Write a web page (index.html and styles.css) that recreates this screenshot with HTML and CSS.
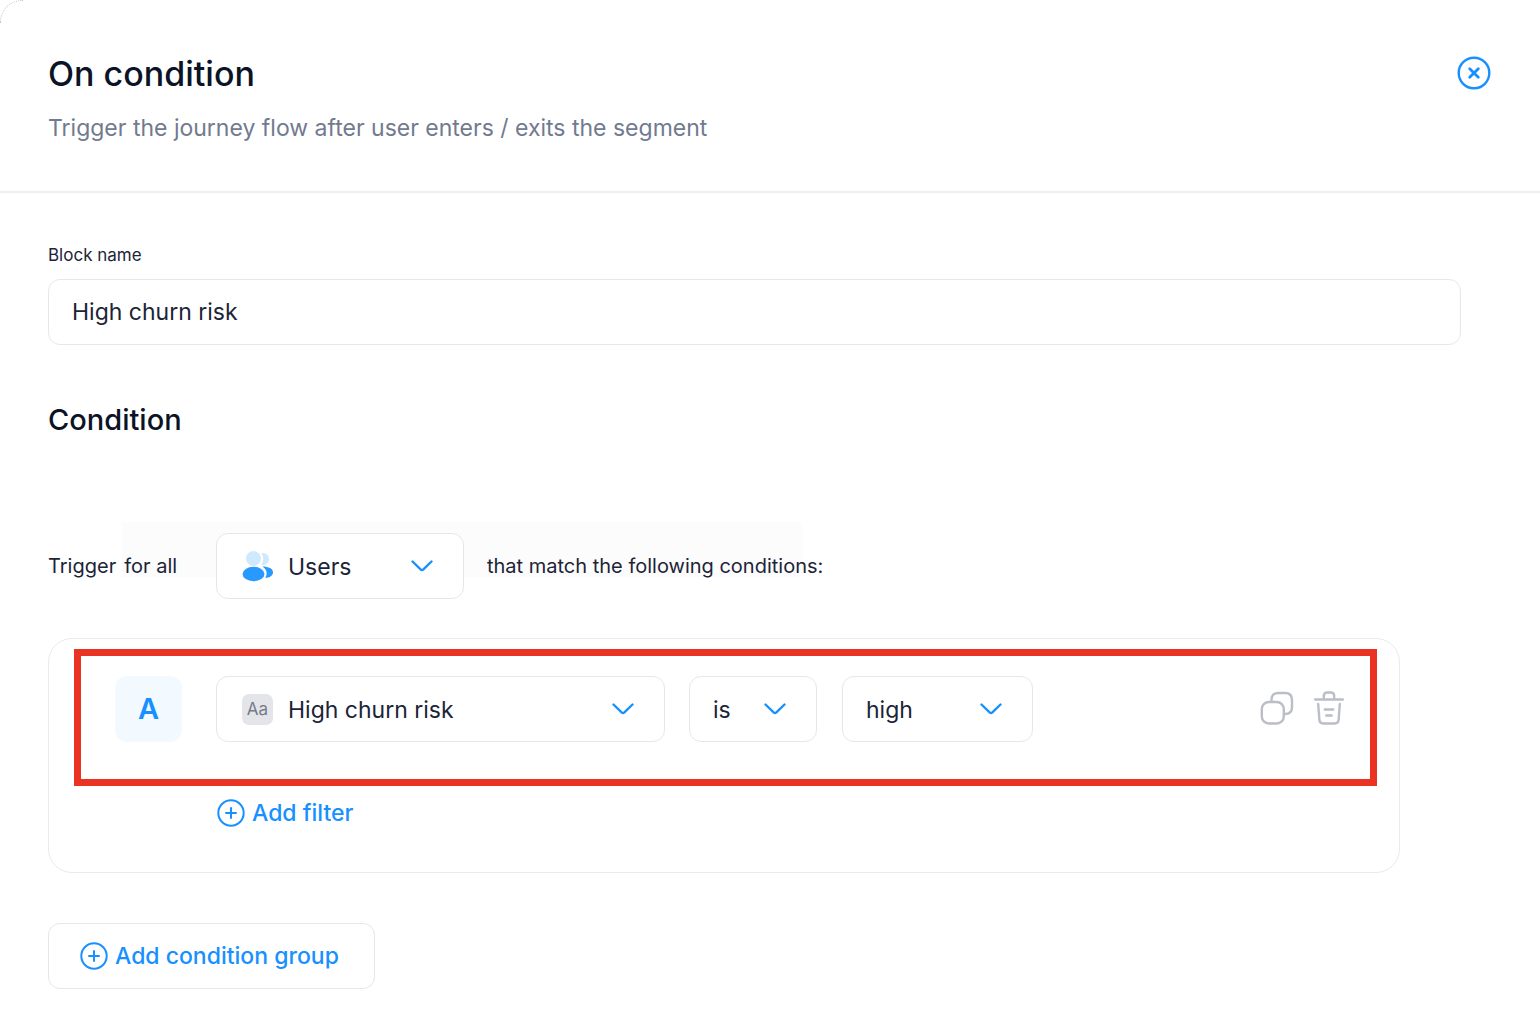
FILE: index.html
```html
<!DOCTYPE html>
<html lang="en">
<head>
<meta charset="utf-8">
<meta name="viewport" content="width=device-width, initial-scale=1">
<title>On condition</title>
<link rel="stylesheet" href="styles.css">
</head>
<body>
<svg class="sprite" aria-hidden="true">
  <symbol id="chevron" viewBox="0 0 22 12"><path d="M1.5 1.5 9.6 9.3q1.4 1.2 2.8 0L20.500 1.500" fill="none" stroke="currentColor" stroke-width="2.400" stroke-linecap="round"/></symbol>
  <symbol id="plus" viewBox="0 0 28 28"><g fill="none" stroke="currentColor" stroke-width="2" stroke-linecap="round"><circle cx="14" cy="14" r="12.700"/><path d="M14 9v10M9 14h10"/></g></symbol>
</svg>
<section class="panel">
  <header class="header">
    <div>
      <h1 class="title">On condition</h1>
      <p class="subtitle">Trigger the journey flow after user enters / exits the segment</p>
    </div>
    <button class="icon-button" type="button" aria-label="Close">
      <svg width="34" height="34" viewBox="0 0 34 34" fill="none" stroke="#1890ff" stroke-linecap="round"><circle cx="17" cy="17" r="15.300" stroke-width="2.400"/><path d="m12.700 12.700 8.600 8.600m0-8.600-8.600 8.600" stroke-width="2.800"/></svg>
    </button>
  </header>
  <main class="content">
    <label class="field-label" for="block-name">Block name</label>
    <input class="box text-field" id="block-name" type="text" value="High churn risk">

    <h2 class="heading">Condition</h2>

    <div class="trigger">
      <label class="trigger-label" for="entity"><span>Trigger</span><span>for all</span></label>
      <div class="picker picker-entity">
        <select class="box" id="entity"><option>Users</option></select>
        <svg class="lead" width="32" height="32" viewBox="0 0 32 32"><g fill="#cfe9ff"><circle cx="11.500" cy="8.500" r="7.500"/><path d="M19.500 3.200a6 6 0 1 1 0 11.600q3.600-6 0-11.600z"/></g><g fill="#2899ff"><ellipse cx="11.500" cy="24" rx="11" ry="7.200"/><path d="M20.500 16.600c6 0 10.500 2.200 10.500 5.600s-3.200 5.500-7.800 5.600c2.600-4 1.700-8.200-2.700-11.200z"/></g></svg>
        <svg class="chevron" width="22" height="12"><use href="#chevron"/></svg>
      </div>
      <span>that match the following conditions:</span>
    </div>

    <div class="card">
      <div class="highlight">
        <span class="badge">A</span>
        <div class="picker picker-attribute">
          <select class="box" aria-label="Attribute"><option>High churn risk</option></select>
          <span class="lead type-tag">Aa</span>
          <svg class="chevron" width="22" height="12"><use href="#chevron"/></svg>
        </div>
        <div class="picker picker-operator">
          <select class="box" aria-label="Operator"><option>is</option></select>
          <svg class="chevron" width="22" height="12"><use href="#chevron"/></svg>
        </div>
        <div class="picker picker-value">
          <select class="box" aria-label="Value"><option>high</option></select>
          <svg class="chevron" width="22" height="12"><use href="#chevron"/></svg>
        </div>
        <div class="actions">
          <button class="icon-button" type="button" aria-label="Duplicate">
            <svg width="34" height="34" viewBox="0 0 34 34" fill="none" stroke="#bbbdc8" stroke-width="2.400"><rect x="1.800" y="11" width="22" height="21.500" rx="7"/><path d="M11.500 11V9q0-7 7-7H25q7 0 7 7v7q0 7-7 7h-1.200"/></svg>
          </button>
          <button class="icon-button" type="button" aria-label="Delete">
            <svg width="30" height="34" viewBox="0 0 30 34" fill="none" stroke="#bbbdc8" stroke-width="2.400" stroke-linecap="round"><path d="M1.200 8.500h27.600M9.800 8.500V5q0-3.500 3.500-3.500h3.400q3.500 0 3.500 3.500v3.500M4.200 13l1.200 16q.3 3.500 3.800 3.500h11.600q3.500 0 3.800-3.500L25.800 13M10.800 18.500h8.400M12.300 24.500h5.400"/></svg>
          </button>
        </div>
      </div>
      <button class="link-button add-filter" type="button"><svg width="28" height="28"><use href="#plus"/></svg>Add filter</button>
    </div>

    <button class="box link-button add-group" type="button"><svg width="28" height="28"><use href="#plus"/></svg>Add condition group</button>
  </main>
</section>
</body>
</html>
```

FILE: styles.css
```css
* { box-sizing: border-box; }

body {
  margin: 0;
  background: #fff;
  color: #1c2438;
  font-family: Inter, "Liberation Sans", sans-serif;
  font-size: 23px;
  line-height: 32px;
}

.sprite { display: none; }
svg { display: block; flex: none; }
button, input, select { margin: 0; font: inherit; color: inherit; }
button { padding: 0; border: 0; background: none; cursor: pointer; }

.panel { position: relative; min-height: 100vh; }

.panel::before {
  content: "";
  position: absolute;
  top: 0;
  left: 0;
  width: 22px;
  height: 22px;
  border: 1px dotted #c4c6ce;
  border-width: 1px 0 0 1px;
  border-radius: 22px 0 0 0;
}

.header {
  display: flex;
  justify-content: space-between;
  align-items: flex-start;
  padding: 50px 49px 47px 48px;
  border-bottom: 2px solid #edeef1;
}

.title {
  margin: 0 0 14px;
  color: #0b1426;
  font-size: 34px;
  font-weight: 500;
  line-height: 48px;
}

.subtitle { margin: 0; color: #717a8f; }
.icon-button { flex: none; }
.header .icon-button { margin-top: 6px; }

.content { padding: 50px 0 44px 48px; }

.field-label {
  display: block;
  margin-bottom: 12px;
  font-size: 17px;
  line-height: 24px;
}

.box {
  display: block;
  height: 66px;
  border: 1px solid #e6e7ea;
  border-radius: 12px;
  background: #fff;
}

.text-field { width: calc(100% - 79px); padding: 0 23px; }

.heading {
  margin: 55px 0 93px;
  color: #0b1426;
  font-size: 29px;
  font-weight: 500;
  line-height: 40px;
}

.trigger {
  position: relative;
  display: flex;
  align-items: center;
  font-size: 20px;
}

/* faint band behind the sentence */
.trigger::before {
  content: "";
  position: absolute;
  z-index: -1;
  top: -11px;
  left: 74px;
  width: 680px;
  height: 55px;
  background: #fcfcfc;
}

.trigger-label { display: flex; gap: 8px; width: 168px; }

.picker { position: relative; font-size: 23px; }

.picker .box {
  width: 100%;
  padding: 2px 60px 0 23px;
  appearance: none;
  cursor: pointer;
}

.picker .lead, .picker .chevron {
  position: absolute;
  top: 0;
  bottom: 0;
  margin: auto 0;
  pointer-events: none;
}

.picker .lead { left: 26px; }
.picker .chevron { right: 31px; color: #1890ff; }
.picker-entity .box, .picker-attribute .box { padding-left: 71px; }
.picker-entity { width: 248px; margin-right: 23px; }
.picker-attribute { width: 449px; margin-right: 24px; }
.picker-operator { width: 128px; margin-right: 25px; }
.picker-value { width: 191px; }

.type-tag {
  width: 31px;
  height: 31px;
  border-radius: 7px;
  background: #e4e5e9;
  color: #767b8b;
  font-size: 17px;
  line-height: 31px;
  text-align: center;
}

.card {
  margin: 39px 140px 50px 0;
  padding: 10px 22px 43px 25px;
  border: 1px solid #e9eaec;
  border-radius: 24px;
}

.highlight {
  display: flex;
  align-items: center;
  padding: 20px 26px 37px 34px;
  border: 7px solid #ea3323;
}

.badge {
  width: 67px;
  margin-right: 34px;
  border-radius: 12px;
  background: #f2faff;
  color: #1890ff;
  font-size: 29px;
  font-weight: 600;
  line-height: 66px;
  text-align: center;
}

.actions { display: flex; gap: 20px; margin-left: auto; padding-bottom: 3px; }

.link-button {
  display: flex;
  align-items: center;
  gap: 7px;
  color: #1890ff;
  font-weight: 500;
}

.add-filter { margin: 11px 0 0 143px; }
.add-group { padding: 0 35px 0 31px; }
```
